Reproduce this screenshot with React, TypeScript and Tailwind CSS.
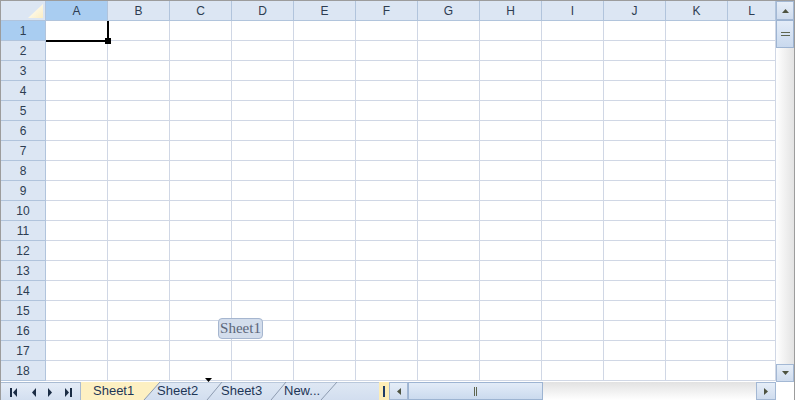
import React from 'react';

const COLS = ['A', 'B', 'C', 'D', 'E', 'F', 'G', 'H', 'I', 'J', 'K', 'L'];
const ROWS = Array.from({ length: 18 }, (_, i) => i + 1);

function ScrollBtn({ dir, className }: { dir: 'up' | 'down' | 'left' | 'right'; className: string }) {
  const pts: Record<string, string> = {
    up: '0,4 7,4 3.5,0',
    down: '0,0 7,0 3.5,4',
    left: '4,0 4,7 0,3.5',
    right: '0,0 0,7 4,3.5',
  };
  const vert = dir === 'up' || dir === 'down';
  return (
    <div className={`flex items-center justify-center border border-[#a3b8d4] bg-gradient-to-b from-[#e6eef8] to-[#cfdcee] ${className}`}>
      <svg width={vert ? 7 : 4} height={vert ? 4 : 7} viewBox={vert ? '0 0 7 4' : '0 0 4 7'}>
        <polygon points={pts[dir]} fill="#4e5340" />
      </svg>
    </div>
  );
}

export default function App() {
  return (
    <div className="w-[800px] h-[400px] bg-white overflow-hidden font-['Liberation_Sans',Arial,sans-serif]">
      <div className="w-[795px] h-[400px] border-l border-t border-r border-[#9c9c9c] flex flex-col">
        <div className="flex h-[381px]">
          {/* Grid */}
          <div className="relative w-[775px] h-[381px] flex flex-col">
            {/* Header row */}
            <div className="flex h-[20px] shrink-0">
              <div className="w-[45px] h-[20px] border-r border-b border-[#b1c4dc] bg-[#dce6f3] relative">
                <svg width="44" height="19" className="absolute left-0 top-0">
                  <defs>
                    <linearGradient id="cg" x1="0" y1="0" x2="1" y2="1">
                      <stop offset="0" stopColor="#ffffff" />
                      <stop offset="1" stopColor="#fbeec4" />
                    </linearGradient>
                  </defs>
                  <polygon points="42,3 42,17 27,17" fill="url(#cg)" />
                </svg>
              </div>
              {COLS.map((c, i) => (
                <div
                  key={c}
                  className={`${i === 11 ? 'w-[48px]' : 'w-[62px]'} h-[20px] border-r border-b border-[#b1c4dc] flex items-center justify-center text-[12px] text-[#2d3d52] ${
                    i === 0 ? 'bg-[#a9cdf1]' : 'bg-[#dce6f3]'
                  }`}
                >
                  {c}
                </div>
              ))}
            </div>
            {ROWS.map((r) => (
              <div key={r} className="flex h-[20px] shrink-0">
                <div
                  className={`w-[45px] h-[20px] border-r border-b border-[#b1c4dc] flex items-center justify-center text-[12px] text-[#2d3d52] ${
                    r === 1 ? 'bg-[#a9cdf1]' : 'bg-[#dce6f3]'
                  }`}
                >
                  {r}
                </div>
                {COLS.map((c, i) => (
                  <div
                    key={c}
                    className={`${i === 11 ? 'w-[48px]' : 'w-[62px]'} h-[20px] border-r border-b border-[#d0d7e5] ${
                      r === 1 && i === 0 ? 'relative' : ''
                    }`}
                  >
                    {r === 1 && i === 0 && (
                      <div className="absolute left-0 top-0 right-[-2px] bottom-[-2px] border-r-2 border-b-2 border-black z-10">
                        <div className="absolute right-[-4px] bottom-[-4px] w-[6px] h-[6px] bg-black" />
                      </div>
                    )}
                  </div>
                ))}
              </div>
            ))}
            {/* Tooltip */}
            <div className="absolute left-[217px] top-[317px] w-[45px] h-[21px] rounded-[4px] border border-[#a6b6cf] bg-[#d3ddec] flex items-center justify-center text-[15px] leading-none text-[#5b667a] font-['Liberation_Serif',serif]">
              Sheet1
            </div>
            {/* Drop marker */}
            <svg width="7" height="4" className="absolute left-[204px] top-[377px]">
              <polygon points="0,0 7,0 3.5,4" fill="#000" />
            </svg>
          </div>
          {/* Vertical scrollbar */}
          <div className="w-[18px] h-[381px] flex flex-col bg-gradient-to-r from-white to-[#e3e3e3]">
            <ScrollBtn dir="up" className="h-[19px] shrink-0" />
            <div className="h-[28px] shrink-0 border border-[#9db4d2] bg-gradient-to-b from-[#e3ecf8] to-[#c9d9ee] flex flex-col items-center justify-center gap-[2px]">
              <div className="w-[9px] h-[1px] bg-[#5f6650]" />
              <div className="w-[9px] h-[1px] bg-[#5f6650]" />
            </div>
            <div className="flex-1" />
            <ScrollBtn dir="down" className="h-[18px] shrink-0" />
          </div>
        </div>
        {/* Bottom bar */}
        <div className="flex h-[18px] shrink-0">
          <div className="w-[80px] h-[18px] border-t border-r border-[#a9bbd2] bg-gradient-to-b from-[#e4ecf7] to-[#d3dff0]">
            <svg width="79" height="17" viewBox="0 1 79 17">
              <rect x="9" y="6" width="2" height="9" fill="#1b2c44" />
              <polygon points="16,6 16,15 12,10.5" fill="#1b2c44" />
              <polygon points="35,6 35,15 31,10.5" fill="#1b2c44" />
              <polygon points="47,6 47,15 51,10.5" fill="#1b2c44" />
              <polygon points="64,6 64,15 68,10.5" fill="#1b2c44" />
              <rect x="69" y="6" width="2" height="9" fill="#1b2c44" />
            </svg>
          </div>
          <div className="relative w-[298px] h-[18px] flex items-center text-[13px] text-[#1e3657] bg-gradient-to-b from-[#dfe8f4] to-[#d2deef]">
            <svg width="298" height="18" className="absolute left-0 top-0">
              <polygon points="0,0 79,0 63,18 0,18" fill="#fdf0c2" />
              <line x1="78" y1="0.5" x2="298" y2="0.5" stroke="#b9c8db" />
              <line x1="63" y1="18" x2="79" y2="0" stroke="#8d9bb0" />
              <line x1="126" y1="18" x2="141" y2="0" stroke="#8d9bb0" />
              <line x1="190" y1="18" x2="205" y2="0" stroke="#8d9bb0" />
              <line x1="240" y1="18" x2="256" y2="0" stroke="#8d9bb0" />
            </svg>
            <span className="relative ml-[12px] w-[64px] leading-[18px]">Sheet1</span>
            <span className="relative w-[64px] leading-[18px]">Sheet2</span>
            <span className="relative w-[63px] leading-[18px]">Sheet3</span>
            <span className="relative leading-[18px]">New...</span>
          </div>
          <div className="w-[10px] h-[18px] bg-[#fdedb6] flex items-center">
            <div className="ml-[4px] w-[2px] h-[11px] bg-[#1d3b66]" />
          </div>
          <ScrollBtn dir="left" className="w-[19px] h-[18px]" />
          <div className="w-[135px] h-[18px] border border-[#9db4d2] bg-gradient-to-b from-[#e3ecf8] to-[#cbdaee] flex items-center justify-center gap-[1px]">
            <div className="w-[1px] h-[9px] bg-[#5f6650]" />
            <div className="w-[1px] h-[9px] bg-[#5f6650]" />
          </div>
          <div className="w-[213px] h-[18px] bg-gradient-to-b from-[#e2e2e2] to-white" />
          <ScrollBtn dir="right" className="w-[20px] h-[18px]" />
          <div className="w-[18px] h-[18px] bg-white" />
        </div>
      </div>
    </div>
  );
}
